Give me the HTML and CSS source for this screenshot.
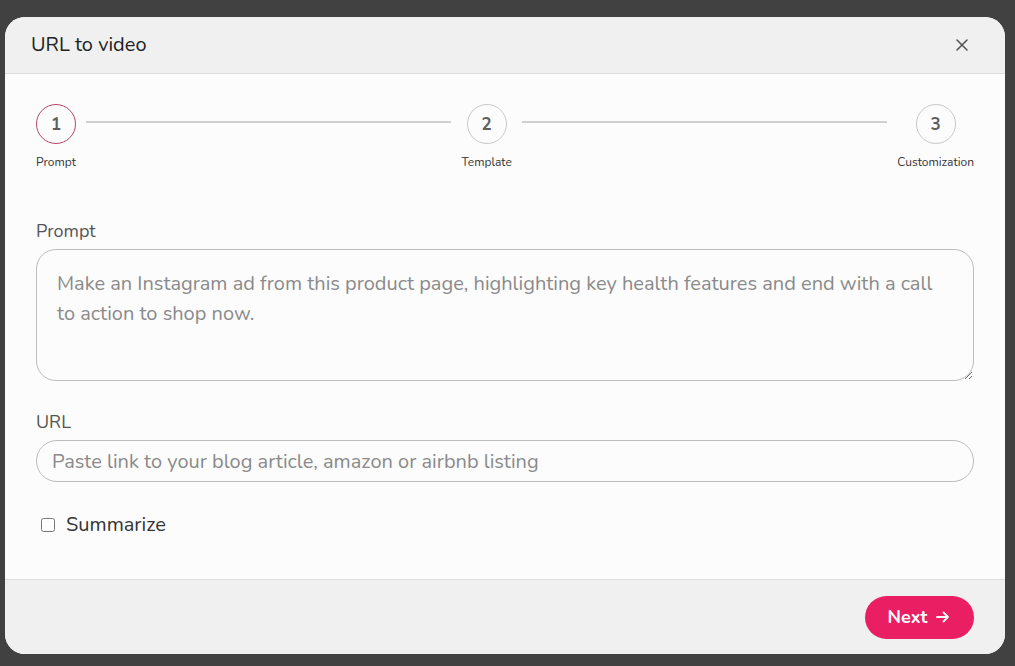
FILE: index.html
```html
<!DOCTYPE html>
<html lang="en">
<head>
<meta charset="utf-8">
<title>URL to video</title>
<link rel="stylesheet" href="styles.css">
</head>
<body>
<div class="modal">
  <header class="modal-header">
    <h1 class="modal-title">URL to video</h1>
    <button class="close-btn" aria-label="Close">
      <svg width="14" height="14" viewBox="0 0 14 14"><path d="M2 2L12 12M12 2L2 12" stroke="#555" stroke-width="1.6" stroke-linecap="round"/></svg>
    </button>
  </header>
  <main class="modal-body">
    <div class="stepper">
      <div class="step active">
        <div class="circle">1</div>
        <div class="step-label">Prompt</div>
      </div>
      <div class="line"></div>
      <div class="step">
        <div class="circle">2</div>
        <div class="step-label">Template</div>
      </div>
      <div class="line"></div>
      <div class="step">
        <div class="circle">3</div>
        <div class="step-label">Customization</div>
      </div>
    </div>

    <label class="field-label">Prompt</label>
    <textarea class="textarea" placeholder="Make an Instagram ad from this product page, highlighting key health features and end with a call to action to shop now."></textarea>

    <label class="field-label url-label">URL</label>
    <input class="input" type="text" placeholder="Paste link to your blog article, amazon or airbnb listing">

    <label class="check">
      <input type="checkbox" class="checkbox">
      <span>Summarize</span>
    </label>
  </main>
  <footer class="modal-footer">
    <button class="next-btn">Next
      <svg width="16" height="14" viewBox="0 0 16 14"><path d="M2 7H13M8.5 2.5L13 7L8.5 11.5" stroke="#fff" stroke-width="1.8" fill="none" stroke-linecap="round" stroke-linejoin="round"/></svg>
    </button>
  </footer>
</div>
</body>
</html>
```
FILE: styles.css
```css
* { box-sizing: border-box; }
html, body { margin: 0; height: 100%; }
body {
  background: #414141;
  font-family: "Nunito", "Open Sans", Lato, sans-serif;
  padding: 17px 10px 12px 5px;
}
.modal {
  width: 1000px;
  height: 637px;
  background: #fcfcfc;
  border-radius: 20px;
  overflow: hidden;
  display: flex;
  flex-direction: column;
}
.modal-header {
  height: 57px;
  background: #eff0ef;
  border-bottom: 1px solid #dcdedd;
  display: flex;
  align-items: center;
  justify-content: space-between;
  padding: 0 36px 0 26px;
  flex-shrink: 0;
}
.modal-title {
  margin: 0;
  font-size: 20px;
  line-height: 26px;
  font-weight: 400;
  color: #222;
}
.close-btn {
  border: 0;
  background: none;
  padding: 0;
  display: flex;
  cursor: pointer;
}
.modal-body {
  flex: 1;
  padding: 30px 31px 0 31px;
  display: flex;
  flex-direction: column;
}
.stepper {
  display: flex;
  align-items: flex-start;
}
.step {
  display: flex;
  flex-direction: column;
  align-items: center;
}
.circle {
  width: 40px;
  height: 40px;
  border-radius: 50%;
  border: 1px solid #c9c9c9;
  display: flex;
  align-items: center;
  justify-content: center;
  font-size: 17px;
  font-weight: 700;
  color: #5f5f5f;
}
.step.active .circle { border-color: #b8446f; }
.step-label {
  margin-top: 10px;
  font-size: 12px;
  line-height: 16px;
  color: #333;
  white-space: nowrap;
}
.line {
  flex: 1;
  height: 2px;
  background: #cfcfcf;
  margin: 17px 10px 0 10px;
}
.field-label {
  font-size: 18px;
  line-height: 22px;
  color: #555;
  margin-top: 50px;
  margin-bottom: 7px;
}
.url-label { margin-top: 30px; }
.textarea {
  width: 938px;
  height: 132px;
  border: 1px solid #bdbdbd;
  border-radius: 20px;
  background: #fcfcfc;
  padding: 19px 20px;
  font-family: inherit;
  font-size: 20px;
  line-height: 30px;
  color: #333;
  resize: vertical;
  outline: none;
}
.textarea::placeholder { color: #8a8a8a; }
.input {
  width: 938px;
  height: 42px;
  border: 1px solid #bdbdbd;
  border-radius: 21px;
  background: #fcfcfc;
  padding: 0 15px;
  font-family: inherit;
  font-size: 20px;
  color: #333;
  outline: none;
}
.input::placeholder { color: #8a8a8a; }
.check {
  display: flex;
  align-items: center;
  gap: 11px;
  margin-top: 30px;
  padding-left: 5px;
  font-size: 20px;
  line-height: 26px;
  color: #333;
}
.checkbox {
  margin: 0;
  width: 14px;
  height: 14px;
}
.modal-footer {
  height: 75px;
  background: #eff0ef;
  border-top: 1px solid #dcdedd;
  display: flex;
  align-items: center;
  justify-content: flex-end;
  padding: 0 31px 0 0;
  flex-shrink: 0;
}
.next-btn {
  width: 109px;
  height: 43px;
  border: 0;
  border-radius: 22px;
  background: #e91e63;
  color: #fff;
  font-family: inherit;
  font-size: 18px;
  font-weight: 700;
  display: flex;
  align-items: center;
  justify-content: center;
  gap: 8px;
  cursor: pointer;
}
```
